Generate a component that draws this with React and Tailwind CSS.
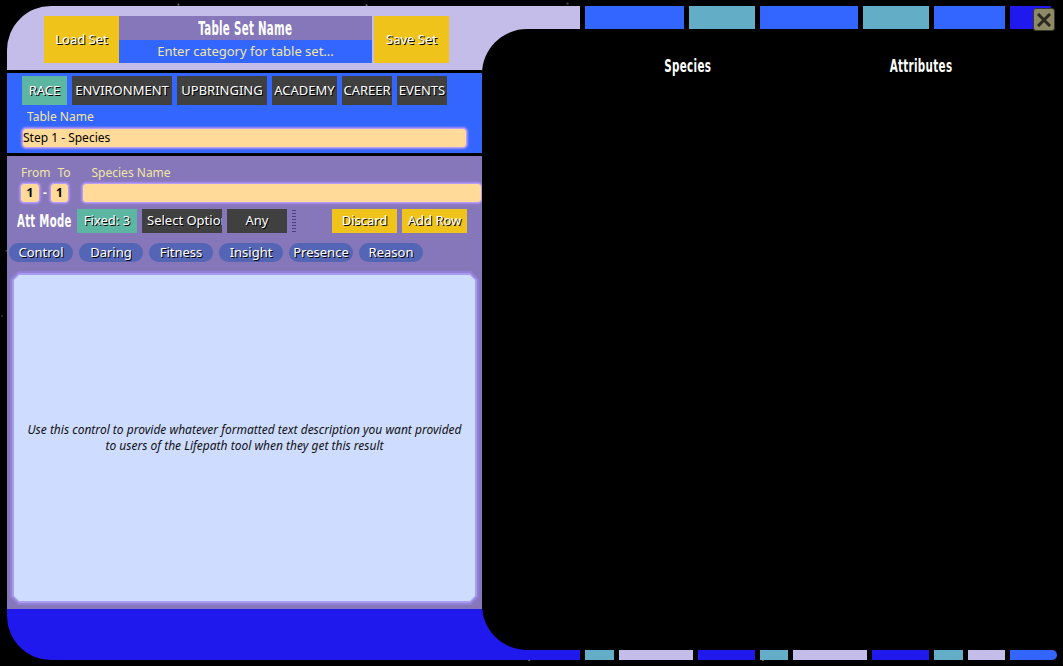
import React from "react";

const body = { fontFamily: '"Noto Sans", "Open Sans", sans-serif' };
const cond = { fontFamily: '"DejaVu Sans Condensed", "DejaVu Sans", sans-serif' };

function Stars() {
  let s = 12345;
  const rnd = () => {
    s = (s * 1103515245 + 12345) % 2147483648;
    return s / 2147483648;
  };
  const stars = [];
  for (let i = 0; i < 220; i++) {
    stars.push({ x: rnd() * 1063, y: rnd() * 666, r: 0.5 + rnd() * 0.8, o: 0.3 + rnd() * 0.6 });
  }
  return (
    <svg className="absolute inset-0 pointer-events-none" width="1063" height="666">
      {stars.map((st, i) => (
        <circle key={i} cx={st.x} cy={st.y} r={st.r} fill="#d8d8d8" opacity={st.o} />
      ))}
    </svg>
  );
}

function Cond({ children, className = "" }) {
  return (
    <span className={"inline-block whitespace-nowrap font-bold text-white leading-none " + className} style={cond}>
      {children}
    </span>
  );
}

const shadow = "[text-shadow:1px_1px_0_#000]";

function Tab({ w, active, children }) {
  return (
    <div
      className={`h-[29px] ${w} flex items-center justify-center text-[13px] text-white ${shadow} ${
        active ? "bg-[#5db6a2]" : "bg-[#404040]"
      }`}
    >
      {children}
    </div>
  );
}

function Pill({ children }) {
  return (
    <div className={`w-[64px] h-[19px] rounded-full bg-[#5565b5] flex items-center justify-center text-[13px] text-white ${shadow}`}>
      {children}
    </div>
  );
}

const glowInput =
  "bg-[#ffda99] border border-[#b89cf5] shadow-[0_0_2px_1px_#a98cf2] rounded-[4px]";

export default function App() {
  return (
    <div className="relative w-[1063px] h-[666px] bg-black overflow-hidden" style={body}>
      <Stars />
      <div className="relative flex pt-[6px] pl-[7px]">
        {/* LEFT COLUMN */}
        <div className="flex flex-col w-[475px]">
          {/* header */}
          <div className="h-[64px] bg-[#c4bdea] rounded-tl-[44px] flex items-start pt-[10px] pl-[37px]">
            <div className={`w-[75px] h-[47px] bg-[#efc31a] flex items-center justify-center text-[13px] text-white ${shadow}`}>
              Load Set
            </div>
            <div className="w-[253px] flex flex-col">
              <div className="h-[24px] bg-[#8577b9] flex items-center justify-center">
                <Cond className="text-[19px] scale-x-[0.6] tracking-[0.5px]">Table Set Name</Cond>
              </div>
              <div className="h-[23px] bg-[#3366ff] flex items-center justify-center text-[13px] text-[#f2e6a2]">
                Enter category for table set...
              </div>
            </div>
            <div className={`ml-[2px] w-[75px] h-[47px] bg-[#efc31a] flex items-center justify-center text-[13px] text-white ${shadow}`}>
              Save Set
            </div>
          </div>

          {/* blue tabs panel */}
          <div className="mt-[3px] h-[80px] bg-[#3366ff] pt-[3px] pl-[15px] flex flex-col">
            <div className="flex gap-[5px]">
              <Tab w="w-[45px]" active>RACE</Tab>
              <Tab w="w-[100px]">ENVIRONMENT</Tab>
              <Tab w="w-[90px]">UPBRINGING</Tab>
              <Tab w="w-[65px]">ACADEMY</Tab>
              <Tab w="w-[50px]">CAREER</Tab>
              <Tab w="w-[50px]">EVENTS</Tab>
            </div>
            <div className="pl-[5px] mt-[4px] h-[16px] text-[12px] leading-[16px] text-[#f2e6a2]">Table Name</div>
            <div className={`mt-[3px] w-[445px] h-[20px] ${glowInput} flex items-center text-[12px] text-black`}>
              Step 1 - Species
            </div>
          </div>

          {/* purple panel */}
          <div className="mt-[3px] h-[453px] bg-[#8577b9] flex flex-col">
            <div className="flex pt-[9px] h-[25px] text-[12px] leading-[16px] text-[#f2e6a2]">
              <span className="ml-[14px]">From</span>
              <span className="ml-[7px]">To</span>
              <span className="ml-[21px]">Species Name</span>
            </div>
            <div className="flex items-center h-[21px] mt-[1px]">
              <div className={`ml-[13px] w-[20px] h-[20px] ${glowInput} flex items-center justify-center text-[12px] font-bold text-black`}>1</div>
              <div className="w-[10px] text-center text-[12px] font-bold text-white">-</div>
              <div className={`w-[19px] h-[20px] ${glowInput} flex items-center justify-center text-[12px] font-bold text-black`}>1</div>
              <div className={`ml-[13px] flex-1 h-[20px] ${glowInput}`} />
            </div>
            <div className="flex items-center h-[24px] mt-[6px]">
              <div className="w-[70px] pl-[10px] flex items-center">
                <Cond className="text-[17px] scale-x-[0.66] origin-left tracking-[0.5px]">Att Mode</Cond>
              </div>
              <div className={`w-[60px] h-[24px] bg-[#5db6a2] flex items-center justify-center text-[13px] text-white ${shadow}`}>Fixed: 3</div>
              <div className={`ml-[5px] w-[80px] h-[24px] bg-[#404040] overflow-hidden whitespace-nowrap flex items-center pl-[5px] text-[13px] text-white ${shadow}`}>Select Options</div>
              <div className={`ml-[5px] w-[60px] h-[24px] bg-[#404040] flex items-center justify-center text-[13px] text-white ${shadow}`}>Any</div>
              <div className="ml-[5px] w-[4px] h-[22px] bg-[repeating-linear-gradient(to_bottom,#4a3f80_0_1px,transparent_1px_3px)]" />
              <div className={`ml-[36px] w-[65px] h-[24px] bg-[#efc31a] flex items-center justify-center text-[13px] text-white ${shadow}`}>Discard</div>
              <div className={`ml-[5px] w-[65px] h-[24px] bg-[#efc31a] flex items-center justify-center text-[13px] text-white ${shadow}`}>Add Row</div>
            </div>
            <div className="flex gap-[6px] pl-[2px] mt-[10px]">
              <Pill>Control</Pill>
              <Pill>Daring</Pill>
              <Pill>Fitness</Pill>
              <Pill>Insight</Pill>
              <Pill>Presence</Pill>
              <Pill>Reason</Pill>
            </div>
            <div className="ml-[3px] mt-[9px] w-[469px] h-[334px] bg-[#9080d6] p-[2px] [clip-path:polygon(8px_0,calc(100%-8px)_0,100%_8px,100%_calc(100%-8px),calc(100%-8px)_100%,8px_100%,0_calc(100%-8px),0_8px)]">
              <div className="w-full h-full bg-[#a99cf0] p-[2px] [clip-path:polygon(7px_0,calc(100%-7px)_0,100%_7px,100%_calc(100%-7px),calc(100%-7px)_100%,7px_100%,0_calc(100%-7px),0_7px)]">
                <div className="w-full h-full bg-[#cddcff] flex items-center justify-center text-center px-[6px] text-[12px] italic text-[#111] leading-[16px] [clip-path:polygon(5px_0,calc(100%-5px)_0,100%_5px,100%_calc(100%-5px),calc(100%-5px)_100%,5px_100%,0_calc(100%-5px),0_5px)]">
                  <p className="whitespace-nowrap">
                    Use this control to provide whatever formatted text description you want provided
                    <br />
                    to users of the Lifepath tool when they get this result
                  </p>
                </div>
              </div>
            </div>
          </div>

          {/* bottom blue */}
          <div className="h-[51px] bg-[#2019ee] rounded-bl-[44px]" />
        </div>

        {/* RIGHT COLUMN */}
        <div className="w-[575px] flex flex-col">
          <div className="h-[23px] flex gap-[5px]">
            <div className="w-[98px] bg-[#c4bdea]" />
            <div className="w-[99px] bg-[#3366ff]" />
            <div className="w-[66px] bg-[#63aec6]" />
            <div className="w-[98px] bg-[#3366ff]" />
            <div className="w-[66px] bg-[#63aec6]" />
            <div className="w-[71px] bg-[#3366ff]" />
            <div className="w-[41px] bg-[#2019ee]" />
          </div>
          <div className="h-[621px] bg-[linear-gradient(to_bottom,#c4bdea_50%,#2019ee_50%)]">
            <div className="h-full bg-black rounded-l-[45px] flex pt-[28px] pl-[88px]">
              <div className="w-[236px] flex justify-center h-[20px]">
                <Cond className="text-[18px] scale-x-[0.64] tracking-[0.5px]">Species</Cond>
              </div>
              <div className="w-[230px] flex justify-center h-[20px]">
                <Cond className="text-[18px] scale-x-[0.64] tracking-[0.5px]">Attributes</Cond>
              </div>
            </div>
          </div>
          <div className="h-[10px] flex gap-[5px]">
            <div className="w-[98px] bg-[#2019ee]" />
            <div className="w-[29px] bg-[#63aec6]" />
            <div className="w-[74px] bg-[#c4bdea]" />
            <div className="w-[57px] bg-[#2019ee]" />
            <div className="w-[29px] bg-[#63aec6]" />
            <div className="w-[74px] bg-[#c4bdea]" />
            <div className="w-[57px] bg-[#2019ee]" />
            <div className="w-[29px] bg-[#63aec6]" />
            <div className="w-[37px] bg-[#c4bdea]" />
            <div className="w-[47px] bg-[#3366ff] rounded-r-[5px]" />
          </div>
        </div>
      </div>

      {/* close button */}
      <div className="absolute left-[1033px] top-[8px] w-[22px] h-[23px] rounded-[3px] bg-[#8f8a66] border border-[#3a3a2a] flex items-center justify-center">
        <svg width="14" height="14" viewBox="0 0 14 14">
          <path d="M2 2 L12 12 M12 2 L2 12" stroke="#2a2a22" strokeWidth="3" strokeLinecap="square" />
        </svg>
      </div>
    </div>
  );
}
